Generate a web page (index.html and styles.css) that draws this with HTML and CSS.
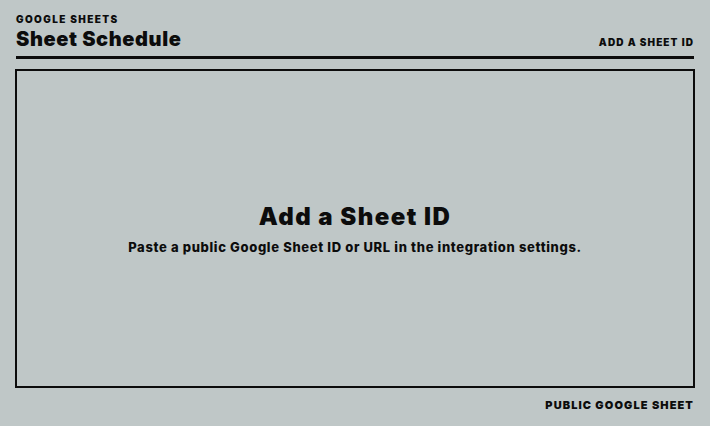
FILE: index.html
```html
<!DOCTYPE html>
<html lang="en">
<head>
<meta charset="utf-8">
<title>Sheet Schedule</title>
<link rel="stylesheet" href="styles.css">
</head>
<body>
<main class="widget">
  <header class="widget-head">
    <div class="titles">
      <div class="eyebrow">Google Sheets</div>
      <h1 class="title">Sheet Schedule</h1>
    </div>
    <div class="head-meta">Add a Sheet ID</div>
  </header>
  <section class="empty">
    <h2 class="empty-title">Add a Sheet ID</h2>
    <p class="empty-text">Paste a public Google Sheet ID or URL in the integration settings.</p>
  </section>
  <footer class="widget-foot">Public Google Sheet</footer>
</main>
</body>
</html>
```

FILE: styles.css
```css
* { box-sizing: border-box; }

html, body {
  margin: 0;
  height: 100%;
}

body {
  background: #bfc7c7;
  color: #0c0c0c;
  font-family: Inter, "Liberation Sans", sans-serif;
}

.widget {
  height: 100%;
  padding: 12px 16px 14px;
  display: grid;
  grid-template-rows: auto 1fr auto;
  row-gap: 10px;
}

.widget-head {
  display: flex;
  justify-content: space-between;
  align-items: flex-end;
  border-bottom: 3px solid #0c0c0c;
  padding-bottom: 5px;
}

.eyebrow {
  font-size: 10px;
  font-weight: 900;
  letter-spacing: 0.14em;
  text-transform: uppercase;
  line-height: 14px;
}

.title {
  margin: 1px 0 0;
  font-size: 20px;
  font-weight: 900;
  line-height: 24px;
  letter-spacing: 0.03em;
}

.head-meta {
  font-size: 10px;
  font-weight: 900;
  letter-spacing: 0.11em;
  text-transform: uppercase;
  line-height: 14px;
  padding-bottom: 2px;
}

.empty {
  margin: 0 -1px;
  border: 2px solid #0c0c0c;
  display: flex;
  flex-direction: column;
  align-items: center;
  justify-content: center;
  text-align: center;
}

.empty-title {
  margin: 0;
  font-size: 24px;
  font-weight: 900;
  line-height: 30px;
  letter-spacing: 0.06em;
}

.empty-text {
  margin: 6px 0 0;
  font-size: 13px;
  font-weight: 800;
  line-height: 18px;
  letter-spacing: 0.05em;
}

.widget-foot {
  text-align: right;
  font-size: 11px;
  font-weight: 900;
  letter-spacing: 0.1em;
  text-transform: uppercase;
  line-height: 14px;
}
```
